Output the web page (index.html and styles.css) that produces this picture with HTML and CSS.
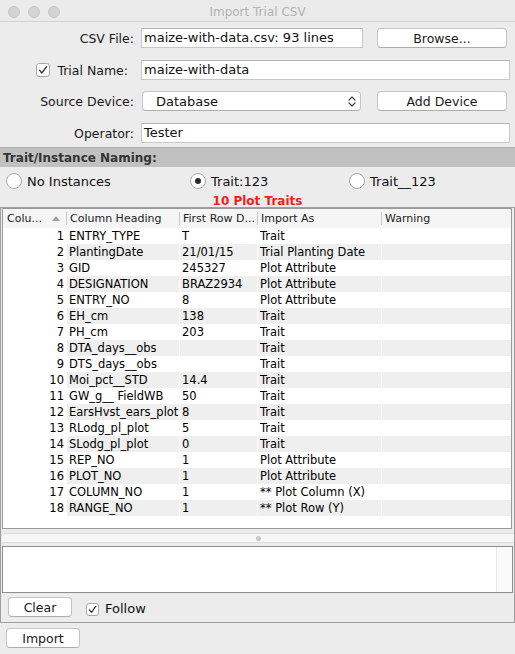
FILE: index.html
```html
<!DOCTYPE html>
<html>
<head>
<meta charset="utf-8">
<title>Import Trial CSV</title>
<link rel="stylesheet" href="styles.css">
</head>
<body>
<div class="titlebar">
  <div class="lights"><span class="light"></span><span class="light"></span><span class="light"></span></div>
  <div class="title">Import Trial CSV</div>
  <div></div>
</div>

<div class="form">
  <div class="row">
    <div class="label">CSV File:</div>
    <div class="field w-short">maize-with-data.csv: 93 lines</div>
    <div class="btn btn-side">Browse...</div>
  </div>
  <div class="row row-2">
    <div class="label label-check">
      <span class="check"><svg width="12" height="12" viewBox="0 0 12 12"><path d="M2.5 6.2 L4.8 9 L9.6 2.6" fill="none" stroke="#333" stroke-width="1.3" stroke-linecap="round" stroke-linejoin="round"/></svg></span>
      <span>Trial Name:</span>
    </div>
    <div class="field w-long">maize-with-data</div>
  </div>
  <div class="row row-3">
    <div class="label">Source Device:</div>
    <div class="combo">
      <span>Database</span>
      <svg width="8" height="13" viewBox="0 0 8 13"><path d="M1 5 L4 2 L7 5 M1 8 L4 11 L7 8" fill="none" stroke="#444" stroke-width="1.2" stroke-linecap="round" stroke-linejoin="round"/></svg>
    </div>
    <div class="btn btn-side btn-device">Add Device</div>
  </div>
  <div class="row row-4">
    <div class="label">Operator:</div>
    <div class="field w-long">Tester</div>
  </div>
</div>

<div class="section">Trait/Instance Naming:</div>

<div class="radios">
  <div class="radio-opt opt-1"><span class="radio"></span><span>No Instances</span></div>
  <div class="radio-opt opt-2"><span class="radio on"><span class="dot"></span></span><span>Trait:123</span></div>
  <div class="radio-opt"><span class="radio"></span><span>Trait__123</span></div>
</div>

<div class="count">10 Plot Traits</div>

<div class="panel">
  <div class="table">
    <div class="thead">
      <div class="th th-first"><span>Colu...</span><span class="sort"></span></div>
      <div class="th">Column Heading</div>
      <div class="th">First Row D...</div>
      <div class="th">Import As</div>
      <div class="th">Warning</div>
    </div>
    <div class="tbody">
      <div class="tr"><div class="td num">1</div><div class="td">ENTRY_TYPE</div><div class="td">T</div><div class="td">Trait</div><div class="td"></div></div>
      <div class="tr"><div class="td num">2</div><div class="td">PlantingDate</div><div class="td">21/01/15</div><div class="td">Trial Planting Date</div><div class="td"></div></div>
      <div class="tr"><div class="td num">3</div><div class="td">GID</div><div class="td">245327</div><div class="td">Plot Attribute</div><div class="td"></div></div>
      <div class="tr"><div class="td num">4</div><div class="td">DESIGNATION</div><div class="td">BRAZ2934</div><div class="td">Plot Attribute</div><div class="td"></div></div>
      <div class="tr"><div class="td num">5</div><div class="td">ENTRY_NO</div><div class="td">8</div><div class="td">Plot Attribute</div><div class="td"></div></div>
      <div class="tr"><div class="td num">6</div><div class="td">EH_cm</div><div class="td">138</div><div class="td">Trait</div><div class="td"></div></div>
      <div class="tr"><div class="td num">7</div><div class="td">PH_cm</div><div class="td">203</div><div class="td">Trait</div><div class="td"></div></div>
      <div class="tr"><div class="td num">8</div><div class="td">DTA_days__obs</div><div class="td"></div><div class="td">Trait</div><div class="td"></div></div>
      <div class="tr"><div class="td num">9</div><div class="td">DTS_days__obs</div><div class="td"></div><div class="td">Trait</div><div class="td"></div></div>
      <div class="tr"><div class="td num">10</div><div class="td">Moi_pct__STD</div><div class="td">14.4</div><div class="td">Trait</div><div class="td"></div></div>
      <div class="tr"><div class="td num">11</div><div class="td">GW_g__ FieldWB</div><div class="td">50</div><div class="td">Trait</div><div class="td"></div></div>
      <div class="tr"><div class="td num">12</div><div class="td">EarsHvst_ears_plot</div><div class="td">8</div><div class="td">Trait</div><div class="td"></div></div>
      <div class="tr"><div class="td num">13</div><div class="td">RLodg_pl_plot</div><div class="td">5</div><div class="td">Trait</div><div class="td"></div></div>
      <div class="tr"><div class="td num">14</div><div class="td">SLodg_pl_plot</div><div class="td">0</div><div class="td">Trait</div><div class="td"></div></div>
      <div class="tr"><div class="td num">15</div><div class="td">REP_NO</div><div class="td">1</div><div class="td">Plot Attribute</div><div class="td"></div></div>
      <div class="tr"><div class="td num">16</div><div class="td">PLOT_NO</div><div class="td">1</div><div class="td">Plot Attribute</div><div class="td"></div></div>
      <div class="tr"><div class="td num">17</div><div class="td">COLUMN_NO</div><div class="td">1</div><div class="td">** Plot Column (X)</div><div class="td"></div></div>
      <div class="tr"><div class="td num">18</div><div class="td">RANGE_NO</div><div class="td">1</div><div class="td">** Plot Row (Y)</div><div class="td"></div></div>
    </div>
  </div>

  <div class="splitter"><div class="split-bar"><span class="split-dot"></span></div></div>

  <div class="log"><div class="log-track"></div></div>

  <div class="logbar">
    <div class="btn btn-clear">Clear</div>
    <div class="follow">
      <span class="check check-sm"><svg width="11" height="11" viewBox="0 0 11 11"><path d="M2.3 5.8 L4.4 8.4 L8.8 2.4" fill="none" stroke="#333" stroke-width="1.2" stroke-linecap="round" stroke-linejoin="round"/></svg></span>
      <span>Follow</span>
    </div>
  </div>
</div>

<div class="btn btn-import">Import</div>
</body>
</html>
```
FILE: styles.css
```css
* { box-sizing: border-box; }
html, body { margin: 0; padding: 0; }
body {
  width: 515px;
  height: 654px;
  overflow: hidden;
  background: #ececec;
  font-family: "DejaVu Sans", "Liberation Sans", sans-serif;
  font-size: 13px;
  color: #111;
}

/* title bar */
.titlebar {
  height: 22px;
  display: grid;
  grid-template-columns: 1fr auto 1fr;
  align-items: start;
  background: #ebebeb;
  border-bottom: 1px solid #d3d3d3;
}
.lights { display: flex; gap: 8px; padding-left: 8px; padding-top: 6px; }
.light {
  width: 12px; height: 12px; border-radius: 50%;
  background: #d4d4d4; border: 1px solid #c6c6c6;
}
.title { font-size: 12px; color: #b2b2b2; line-height: 14px; padding-top: 5px; }

/* form */
.form { padding-top: 6px; display: flex; flex-direction: column; }
.row { display: flex; align-items: center; height: 20px; }
.row-2 { margin-top: 12px; }
.row-3 { margin-top: 11px; }
.row-4 { margin-top: 12px; }
.label { width: 134px; flex: none; text-align: right; font-size: 12.5px; color: #1a1a1a; }
.label-check { display: flex; justify-content: flex-end; align-items: center; gap: 7px; padding-right: 6px; }
.field {
  margin-left: 7px;
  height: 20px;
  background: #fff;
  border: 1px solid #c8c8c8;
  border-top-color: #b6b6b6;
  padding-left: 2px;
  line-height: 18px;
  white-space: nowrap;
  overflow: hidden;
}
.w-short { width: 222px; }
.w-long { width: 369px; }

.btn {
  height: 20px;
  background: #fff;
  border: 1px solid #c4c4c4;
  border-bottom-color: #adadad;
  border-radius: 4px;
  display: flex;
  align-items: center;
  justify-content: center;
  font-size: 12.5px;
  color: #1a1a1a;
}
.btn-side { width: 130px; margin-left: 14px; }
.btn-device { margin-left: 16px; }

.combo {
  margin-left: 8px;
  width: 219px;
  height: 20px;
  background: #fff;
  border: 1px solid #c4c4c4;
  border-bottom-color: #adadad;
  border-radius: 4px;
  display: flex;
  align-items: center;
  justify-content: space-between;
  padding: 0 4px 0 13px;
}

.check {
  width: 14px; height: 14px;
  border: 1px solid #a9a9a9;
  border-radius: 3px;
  background: #fff;
  display: flex; align-items: center; justify-content: center;
  flex: none;
}
.check-sm { width: 13px; height: 13px; }

/* section */
.section {
  margin-top: 4px;
  height: 20px;
  background: #c1c1c1;
  border-top: 1px solid #b1b1b1;
  font-weight: bold;
  font-size: 12px;
  color: #333;
  padding-left: 3px;
  display: flex;
  align-items: center;
}

.radios { display: flex; align-items: center; height: 28px; }
.radio-opt { display: flex; align-items: center; gap: 5px; }
.opt-1 { width: 190px; padding-left: 6px; }
.opt-2 { width: 159px; }
.radio {
  width: 16px; height: 16px; border-radius: 50%;
  background: #fff; border: 1px solid #a7a7a7;
  display: flex; align-items: center; justify-content: center;
  flex: none;
}
.dot { width: 6px; height: 6px; border-radius: 50%; background: #2b2b2b; }

.count {
  height: 12px;
  line-height: 12px;
  text-align: center;
  font-size: 12px;
  font-weight: bold;
  color: #f41c1c;
}

/* panel */
.panel {
  height: 416px;
  border: 1px solid #9e9e9e;
  display: flex;
  flex-direction: column;
}
.table {
  height: 321px;
  margin: 0 2px 0 1px;
  border: 1px solid #9a9a9a;
  background: #fff;
  flex: none;
}
.thead {
  height: 19px;
  display: grid;
  grid-template-columns: 63px 113px 78px 124px 130px;
  background: #f5f5f5;
  font-size: 11px;
  color: #222;
}
.th {
  display: flex;
  align-items: center;
  padding-left: 4px;
  white-space: nowrap;
  overflow: hidden;
  background: linear-gradient(#c9c9c9, #c9c9c9) left center / 1px 13px no-repeat;
}
.th-first { background: none; justify-content: space-between; padding-right: 6px; }
.sort {
  width: 0; height: 0;
  border-left: 4px solid transparent;
  border-right: 4px solid transparent;
  border-bottom: 5px solid #a2a2a2;
}
.tbody { font-size: 11.5px; color: #000; }
.tr {
  display: grid;
  grid-template-columns: 63px 112px 77px 123px 129px;
  column-gap: 1px;
  height: 16px;
  line-height: 16px;
}
.td {
  padding-left: 2px;
  white-space: nowrap;
  overflow: hidden;
}
.tr:nth-child(even) .td { background: #efefef; }
.tr:nth-child(even) .td.num { background: transparent; }
.td.num { text-align: right; padding-right: 2px; padding-left: 0; }

.splitter { height: 17px; padding: 4px 0 3px 1px; flex: none; }
.split-bar {
  height: 10px;
  background: #f6f6f6;
  border-top: 1px solid #dcdcdc;
  border-bottom: 1px solid #dcdcdc;
  display: flex;
  align-items: center;
  justify-content: center;
}
.split-dot { width: 5px; height: 5px; border-radius: 50%; background: #c7c7c7; }

.log {
  height: 47px;
  margin: 0 1px;
  border: 1px solid #8e8e8e;
  background: #fff;
  display: flex;
  justify-content: flex-end;
  flex: none;
}
.log-track { width: 16px; background: #fafafa; border-left: 1px solid #e8e8e8; }

.logbar {
  height: 29px;
  display: flex;
  align-items: flex-start;
  padding: 4px 0 0 7px;
}
.btn-clear { width: 64px; }
.follow {
  display: flex;
  align-items: center;
  gap: 6px;
  margin: 5px 0 0 14px;
  font-size: 13px;
  line-height: 14px;
}

.btn-import { width: 74px; margin: 5px 0 0 6px; }
```
